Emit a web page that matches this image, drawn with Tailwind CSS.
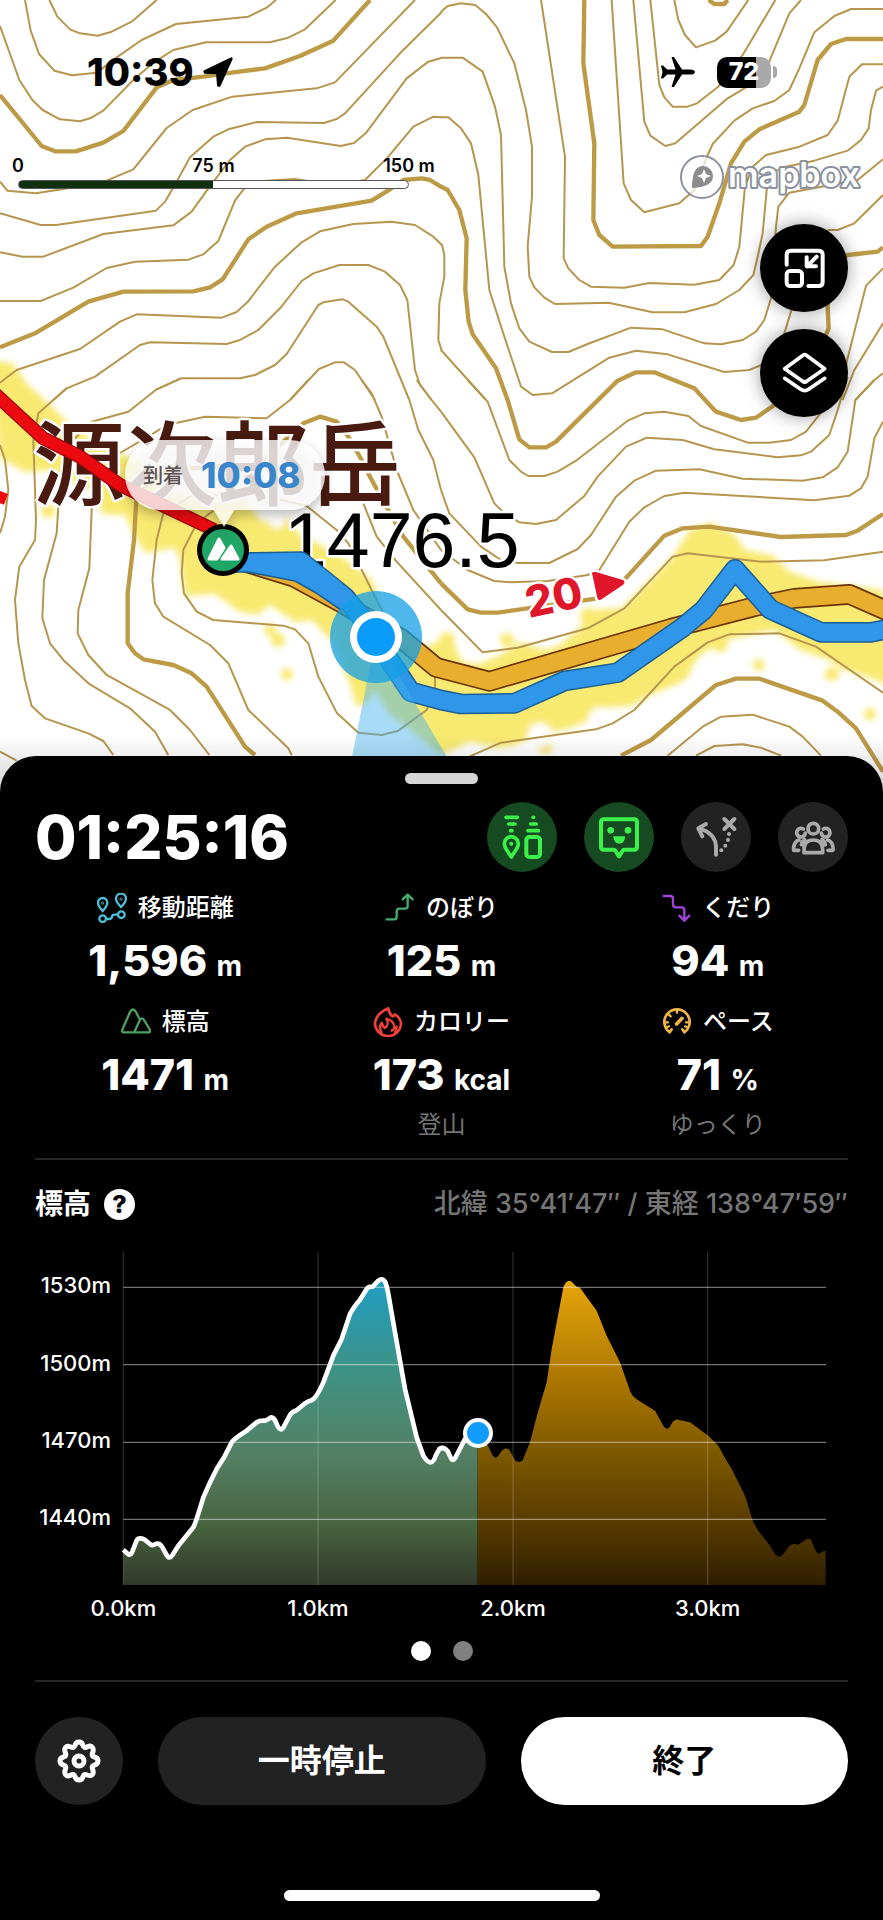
<!DOCTYPE html>
<html lang="ja">

<head>
  <meta charset="UTF-8">
  <meta name="viewport" content="width=device-width, initial-scale=1.0">
  <title>活動記録</title>
  <script src="https://cdn.jsdelivr.net/npm/@tailwindcss/browser@4"></script>
</head>

<body class="bg-black font-['Inter','Noto_Sans_CJK_JP',sans-serif]">

  <!-- Map -->
  <section class="relative h-[800px] overflow-hidden bg-white">
    <svg class="absolute inset-0 w-full h-full" viewBox="0 0 883 800" preserveAspectRatio="xMidYMin slice" aria-label="地図">
      <defs>
        <filter id="soft" x="-5%" y="-5%" width="110%" height="110%"><feGaussianBlur stdDeviation="3" /></filter>
        <filter id="drop" x="-20%" y="-30%" width="140%" height="180%"><feDropShadow dx="0" dy="5" stdDeviation="6" flood-opacity=".35" /></filter>
        <linearGradient id="edge" x1="0" y1="0" x2="0" y2="1"><stop offset="0" stop-color="#000" stop-opacity="0" /><stop offset="1" stop-color="#000" stop-opacity=".2" /></linearGradient>
      </defs>

      <!-- heatmap -->
      <g filter="url(#soft)" fill="#f8e970">
        <path d="M-10 360L12 363 28 385 45 400 70 425 100 445 135 460 160 490 200 500 245 500 262 522 285 515 300 535 340 555 372 580 385 620 420 650 441 640 455 646 462 662 480 664 500 655 520 642 545 650 560 645 580 628 590 610 622 608 650 580 670 560 690 530 710 523 735 535 745 550 772 555 790 572 820 582 883 590 900 690 870 678 840 668 830 660 800 650 775 630 755 634 725 640 700 655 682 682 650 695 632 706 600 708 590 720 570 728 530 738 515 745 500 748 470 742 441 755 425 742 405 725 390 715 375 690 365 705 356 706 352 690 335 645 312 620 295 622 270 605 258 615 240 612 215 594 185 596 180 560 175 548 145 553 132 530 125 515 102 514 95 490 70 480 50 470 25 472 0 458z" />
        <circle cx="278" cy="640" r="7" /><circle cx="270" cy="630" r="6" /><circle cx="287" cy="674" r="6" /><circle cx="48" cy="511" r="7" />
        <circle cx="588" cy="616" r="8" /><circle cx="507" cy="640" r="7" /><circle cx="447" cy="640" r="8" /><circle cx="545" cy="747" r="7" /><circle cx="759" cy="665" r="6" /><circle cx="832" cy="674" r="7" /><circle cx="870" cy="714" r="6" /><circle cx="683" cy="672" r="7" /><circle cx="720" cy="644" r="8" />
        <g fill="#fff"><circle cx="598" cy="717" r="9" /><circle cx="540" cy="735" r="12" /><circle cx="277" cy="520" r="8" /></g>
      </g>

      <!-- contours: one group per quarter of the view, three units to the pixel -->
      <g fill="none" stroke="#b6964f" stroke-width="6" stroke-linejoin="round">
        <g transform="scale(.33333)">
          <path d="M148 0L172 50 210 88 240 100 293 107 335 95 395 65 470 0M75 0L92 92 117 162 163 212 216 226 290 218 350 172 425 120 528 72 745 50 800 23 828 0" />
          <path d="M0 78L58 240 97 300 128 330 180 358 240 364 270 355 310 332 400 240 460 188 520 150 618 127 810 127 865 113 915 88 1007 0M0 545L22 572 107 580 190 567 320 542 400 508 500 384 578 330 697 290 950 265 1005 247 1245 0" />
          <path d="M0 640L122 675 168 675 468 632 495 605 530 545 570 472 640 410 685 388 770 366 972 369 1010 357 1035 340 1200 160 1326 35M0 757L68 770 130 770 310 702 520 676 575 635 625 565 690 480 735 440 795 418 862 413 1022 438 1062 429 1097 400 1220 235 1285 185 1326 173" />
          <path d="M0 903L122 903 220 863 320 804 405 785 565 779 610 763 655 723 705 602 735 562 800 542 885 537 1000 555 1095 540 1165 470 1240 380 1300 350 1326 352" />
          <path d="M0 1148L50 1110 240 1047 360 965 410 943 665 953 710 936 742 907 825 800 905 727 960 694 1060 672 1175 665 1245 675 1300 710 1326 735 1333 765 1333 830 1318 910 1315 1020 1326 1055" />
          <path d="M160 1200L200 1165 285 1130 420 1035 450 1027 680 1032 720 1020 775 990 840 925 905 843 940 820 1018 795 1105 795 1155 815 1200 855 1222 900 1245 1110 1260 1155 1295 1200" />
          <path d="M470 1168L543 1135 720 1135 765 1125 825 1095 860 1062 955 915 970 907 1028 898 1045 905 1130 980 1150 1010 1228 1200M870 1200L957 1107 1005 1087 1032 1087 1065 1110 1125 1200" />
          <path stroke="#bd9a46" stroke-width="13" d="M0 285L125 438 165 454 228 454 310 428 370 393 470 262 520 240 610 230 700 217 795 205 900 168 1000 122 1110 0M0 1042L105 1000 265 905 370 875 580 874 630 862 668 838 745 718 800 680 890 640 1115 602 1170 568 1210 540 1265 535 1290 540 1326 562" />
        </g>
        <g transform="translate(441 0) scale(.33333)">
          <path d="M0 35L20 18 60 10 103 15 135 42 168 82 220 190 255 330 273 440 273 590 260 740 265 830 280 862 310 893 342 912 503 908 635 937 730 937 825 912 895 870 937 825 950 770 965 700 978 560 1000 515 1035 500 1120 482 1220 452 1260 420 1283 385 1290 330 1305 272 1326 260" />
          <path d="M300 0L372 470 368 775 382 805 415 840 450 860 550 863 625 849 760 854 835 840 878 795 895 740 912 560 935 500 975 465 1070 442 1160 405 1190 362 1225 230 1263 193 1326 193" />
          <path d="M512 0L548 550 570 600 610 637 715 610 760 570 800 465 815 432 880 362 935 325 1000 303 1045 270 1075 205 1120 97 1180 48 1230 27 1326 27M577 0L595 200 610 365 628 407 673 438 703 430 860 295 935 250 970 220 1045 40 1080 0" />
          <path d="M628 0L655 255 670 292 695 320 740 320 768 310 830 262 905 165 1003 0M700 0L712 60 732 105 765 142 822 122 857 95 922 0" />
          <path d="M0 173L65 173 125 215 162 320 180 405 190 800 210 910 235 985 265 1025 333 1056 382 1056 440 1032 570 983 665 988 790 1030 840 1033 905 1020 945 995 970 960 990 895 1005 680 1012 620 1045 578 1250 540 1326 478" />
          <path d="M0 352L22 352 60 385 90 430 112 525 145 870 190 1010 240 1160 275 1185 333 1180 505 1073 585 1052 680 1063 850 1116 925 1110 965 1093 1030 1000 1050 935 1100 720 1165 690 1190 690 1240 670 1326 585" />
          <path d="M0 1050L135 1200M1326 805L1275 857 1225 1055 1200 1150 1135 1245M1326 970L1240 1110 1205 1200M1326 1120L1300 1140 1243 1200" />
          <path stroke="#bd9a46" stroke-width="13" d="M430 0L427 190 460 430 457 660 475 705 515 740 780 738 800 710 835 610 870 490 910 425 955 388 1075 335 1090 315 1130 180 1170 132 1215 117 1326 117M803 0L820 12 850 12 860 0M0 560L20 570 55 630 77 715 73 870 83 965 95 1003 165 1105 200 1200 235 1318 265 1342 315 1342 345 1325 530 1142 585 1117 640 1117 760 1165 825 1235 900 1260 945 1253 1000 1215 1080 1120 1140 1040 1163 985 1160 920 1170 800 1220 765 1310 755 1326 742" />
        </g>
        <g transform="translate(0 380) scale(.33333)">
          <path d="M0 195L15 240 25 330 15 410 0 460M200 25L115 100 100 180 108 420 105 480 58 560 45 660 55 790 75 900 95 978 135 1015 265 1060 310 1083 340 1125" />
          <path d="M543 -5L470 28 385 95 275 125 200 200 178 300 175 380 170 460 132 600 127 715 150 790 190 840 265 910 390 985 465 1055 505 1125" />
          <path d="M925 0L870 60 800 115 615 110 500 135 460 160 355 222 280 310 275 390 268 565 235 690 233 760 265 825 320 885 510 990 570 1050 628 1125" />
          <path d="M875 1125L865 1105 745 990 685 850 630 795 490 710 465 670 457 600 470 480 490 400 570 350 760 340 920 378 1010 450 1045 490 1085 570 1115 630 1180 760" />
          <path d="M640 392L590 430 550 510 545 580 552 640 590 695 640 720 850 737 885 748 925 790 955 890 1010 998 1075 1058 1145 1065 1195 1052 1280 990 1305 930 1305 890" />
          <path d="M1085 0L1115 40 1145 110 1190 270 1240 390 1323 510M1228 60L1255 150 1300 240 1323 330M1250 0L1295 60 1323 95M1090 370L1130 470 1190 545 1323 690M0 1115L50 1142" />
          <path stroke="#bd9a46" stroke-width="13" d="M765 1125L735 1100 620 920 575 880 520 855 430 838 405 820 383 790 383 640 402 480 410 340 500 270 780 250 910 130 960 110 1010 125 1045 170 1085 240 1110 290 1170 400 1210 470 1323 610" />
        </g>
        <g transform="translate(441 380) scale(.33333)">
          <path d="M80 0L140 65 205 240 240 275 262 288 310 288 350 275 405 242 560 122 610 100 670 95 742 108 780 138 920 188 985 188 1050 180 1095 155 1135 105" />
          <path d="M0 95L100 232 160 370 190 400 235 427 285 432 345 420 430 348 470 290 555 200 618 173 725 180 820 208 1010 232 1080 226 1110 215 1165 165 1190 90 1220 -10" />
          <path d="M0 330L25 400 120 500 180 540 230 549 325 549 410 507 450 465 525 350 580 302 645 272 775 268 905 296 1085 302 1145 292 1190 262 1220 215 1243 60 1300 0M0 510L80 570 160 603 210 607 320 603 440 585 475 570 565 425 610 382 670 348 730 338 1120 361 1225 347 1260 325 1280 290 1300 175 1326 125" />
          <path d="M0 690L125 817 230 803 440 745 550 685 695 530 740 520 960 545 1150 541 1326 515M85 1130L180 1088 465 1048 515 1030 580 990 700 860 800 787 865 763 1015 760 1125 800 1326 938" />
          <path d="M680 1127L785 1040 840 1010 935 1004 1045 1040 1085 1070 1140 1127M765 1127L820 1098 905 1093 960 1103 1020 1127" />
          <path stroke="#bd9a46" stroke-width="13" d="M0 610L80 688 120 698 170 698 470 655 545 605 670 467 725 445 805 440 1020 471 1215 465 1250 452 1326 402M540 1127L630 1080 825 915 885 896 955 896 1145 962 1190 995 1245 1045 1326 1175" />
        </g>
      </g>

      <!-- place labels -->
      <g stroke="#fff" stroke-width="5" stroke-linejoin="round" paint-order="stroke">
        <text x="33" y="498" font-size="92" font-weight="500" fill="#481a10" font-family="Noto Sans CJK JP, sans-serif">源次郎岳</text>
        <text x="284" y="567" font-size="77" fill="#000" font-family="Liberation Sans, sans-serif">1476.5</text>
        <g fill="#e0162b" transform="translate(529 618) rotate(-12)">
          <text font-size="43" font-weight="800">20</text>
          <path d="M71 -29Q70 -33 75 -31L99 -18Q103 -16 99 -13L74 -3Q71 -2 71 -6z" />
        </g>
      </g>

      <!-- routes -->
      <g transform="translate(441 380) scale(.33333)" fill="none" stroke-linejoin="round">
        <path stroke="#a3090c" stroke-width="42" d="M-1340 40L-1193 175 -1083 230 -963 315 -680 450" />
        <path stroke="#ea0a10" stroke-width="34" d="M-1340 40L-1193 175 -1083 230 -963 315 -680 450M-1340 345L-1305 358" />
        <path stroke="#6b3307" stroke-width="62" d="M-593 545L-440 592 -300 668 -120 775 -15 862 145 904 690 745 940 680 1060 655 1225 643 1400 720" />
        <path stroke="#e8af2e" stroke-width="52" d="M-593 545L-440 592 -300 668 -120 775 -15 862 145 904 690 745 940 680 1060 655 1225 643 1400 720" />
        <path stroke="#1c5f94" stroke-width="62" d="M-640 548L-420 545 -290 650 -200 760 -158 835 -91 935 0 960 60 972 220 970 370 903 530 878 728 740 788 690 882 568 988 688 1140 757 1290 757 1400 735" />
        <path fill="#2f96ea" stroke="#1c5f94" stroke-width="5" d="M-600 572L-438 603 -373 640 -300 690 -260 640 -420 530z" />
        <path stroke="#2f96ea" stroke-width="53" d="M-640 548L-420 545 -290 650 -200 760 -158 835 -91 935 0 960 60 972 220 970 370 903 530 878 728 740 788 690 882 568 988 688 1140 757 1290 757 1400 735" />
      </g>

      <!-- current position -->
      <path fill="#3fb0ee" fill-opacity=".45" d="M376 637L352 757 447 757z" />
      <circle cx="376" cy="637" r="46" fill="#149fe6" fill-opacity=".75" />
      <circle cx="376" cy="637" r="26" fill="#fff" />
      <circle cx="376" cy="637" r="19" fill="#0a9cfb" />

      <!-- summit marker and arrival time -->
      <circle cx="223" cy="550" r="26" fill="#000" />
      <circle cx="223" cy="550" r="21" fill="#20a666" />
      <path fill="#fff" stroke="#fff" stroke-width="3" stroke-linejoin="round" d="M209 559L219 539 224 548 217 559zM222 559L231 546 238 559z" />
      <path fill="#fff" fill-opacity=".78" filter="url(#drop)" d="M160 440H290A35 35 0 0 1 290 510H234L224 527 214 510H160A35 35 0 0 1 160 440z" />
      <text x="143" y="483" font-size="20" font-weight="500" fill="#5b5254">到着</text>
      <text x="201" y="488" font-size="35" font-weight="800" fill="#3a86cb">10:08</text>
      <rect y="735" width="883" height="65" fill="url(#edge)" />
    </svg>

    <div class="relative flex flex-col">
      <div class="mt-12 h-12 flex items-center justify-between pl-[87px] pr-[106px]">
        <div class="flex items-center gap-2">
          <time class="text-[38px] font-extrabold leading-none">10:39</time>
          <svg class="w-8 h-8" viewBox="0 0 96 96" aria-hidden="true"><path stroke="#000" stroke-width="8" stroke-linejoin="round" d="M88 8L8 46 9 49 46 51 49 88 52 88z" /></svg>
        </div>
        <div class="flex items-center gap-[21px]">
          <svg class="w-9 h-8" viewBox="0 0 36 32" aria-label="機内モード"><path d="M35 16c0-1.700-2-2.600-5-2.600h-8L14 1h-2.500l4 12.400H7.200L3 9.500H1L2.500 16 1 22.500h2l4.200-3.900h8.300L11.500 31H14l8-12.400h8c3 0 5-.9 5-2.600z" /></svg>
          <div class="flex items-center gap-[2px]">
            <div class="w-[54px] h-[31px] rounded-[10px] flex items-center justify-center text-white text-[25px] font-extrabold bg-linear-to-r from-black from-73% to-[#a9a9a9] to-73%">72</div>
            <span class="w-1 h-3 rounded-r-full bg-[#a9a9a9]"></span>
          </div>
        </div>
      </div>

      <div class="mt-[51px] h-[60px] flex items-center justify-between pl-[18px] pr-[18px]">
        <div class="w-[391px] mb-2.5">
          <div class="relative h-5 text-[18px] leading-5 font-semibold">
            <span class="absolute left-0 -translate-x-1/2">0</span>
            <span class="absolute left-1/2 -translate-x-1/2 whitespace-nowrap">75 m</span>
            <span class="absolute left-full -translate-x-1/2 whitespace-nowrap">150 m</span>
          </div>
          <div class="mt-1 h-[9px] rounded-full border border-[#555] bg-linear-to-r from-[#10300f] from-50% to-white to-50%"></div>
        </div>
        <svg class="w-[186px] h-[52px]" viewBox="0 0 186 52" aria-label="mapbox">
          <circle cx="23" cy="26" r="21" fill="#fff" fill-opacity=".7" stroke="#8b919d" stroke-width="2" />
          <path fill="#8c8c8c" d="M13 37Q13 15 24 15A10 10 0 0 1 34 25Q34 36 13 37z" />
          <path fill="#fff" d="M25 18l2 5 5 2-5 2-2 5-2-5-5-2 5-2z" />
          <text x="49" y="36" font-size="34" font-weight="600" fill="#fff" stroke="#8b919d" stroke-width="4" stroke-linejoin="round" paint-order="stroke">mapbox</text>
        </svg>
      </div>

      <div class="mt-[17px] pr-[35px] flex flex-col items-end gap-[17px]">
        <button class="size-[88px] rounded-full bg-black shadow-[0_0_18px_rgba(0,0,0,.4)]" aria-label="縮小表示">
          <svg viewBox="0 0 264 264" fill="none" stroke="#fff" stroke-width="12" stroke-linecap="round" stroke-linejoin="round"><path d="M80 122V92q0-12 12-12h84q12 0 12 12v82q0 12-12 12h-31M170 98l-29 29M140 100v27h28" /><rect x="80" y="141" width="46" height="45" rx="10" /></svg>
        </button>
        <button class="size-[88px] rounded-full bg-black shadow-[0_0_18px_rgba(0,0,0,.4)]" aria-label="地図レイヤー">
          <svg viewBox="0 0 264 264" fill="none" stroke="#fff" stroke-width="11" stroke-linecap="round" stroke-linejoin="round"><path d="M127 80q7-6 14 0l53 39-53 37q-7 6-14 0l-53-37zM74 148l48 33q12 8 24 0l48-33" /></svg>
        </button>
      </div>
    </div>
  </section>

  <!-- Activity sheet -->
  <main class="relative -mt-11 rounded-t-[36px] bg-black text-white px-[35px] pb-[18px]">
    <div class="flex justify-center pt-[17px]"><span class="w-[73px] h-[11px] rounded-full bg-[#d6d6d6]"></span></div>

    <div class="mt-[18px] flex items-center justify-between">
      <h1 class="text-[60px] leading-[70px] font-extrabold">01:25:16</h1>
      <div class="flex gap-[27px]">
        <button class="size-[70px] rounded-full bg-[#164a20] text-[#3cf04c]" aria-label="位置情報の送受信">
          <svg viewBox="0 0 210 210" fill="none" stroke="currentColor" stroke-width="12" stroke-linecap="round" stroke-linejoin="round"><path d="M57 46h34M65 66h19M71 86h4M138 46h2M131 66h17M123 86h31M73 165C62 146 52 138 52 125a21 21 0 0 1 42 0c0 13-10 21-21 40z" stroke-width="11" /><rect x="118" y="105" width="41" height="60" rx="9" /><circle cx="73" cy="125" r="6" fill="currentColor" stroke="none" /></svg>
        </button>
        <button class="size-[70px] rounded-full bg-[#164a20] text-[#3cf04c]" aria-label="見守り">
          <svg viewBox="0 0 210 210" fill="none" stroke="currentColor" stroke-width="12" stroke-linecap="round" stroke-linejoin="round"><path d="M60 52h90q9 0 9 9v73q0 9-9 9h-28q-6 0-9 8l-8 12-8-12q-3-8-9-8H60q-9 0-9-9V61q0-9 9-9z" /><g fill="currentColor" stroke="none"><circle cx="80" cy="85" r="10" /><circle cx="132" cy="85" r="10" /><path d="M88 103h35q0 22-17 22t-18-22z" /></g></svg>
        </button>
        <button class="size-[70px] rounded-full bg-[#222] text-[#aaa]" aria-label="ルート外れ通知">
          <svg viewBox="0 0 210 210" fill="none" stroke="currentColor" stroke-width="12" stroke-linecap="round" stroke-linejoin="round"><path d="M105 158V132Q101 92 54 80M75 66L52 79 64 103M130 51l30 30M160 51l-30 30" /><g fill="currentColor" stroke="none"><circle cx="144" cy="96" r="6" /><circle cx="141" cy="114" r="6" /><circle cx="133" cy="131" r="6" /><circle cx="121" cy="145" r="6" /></g></svg>
        </button>
        <button class="size-[70px] rounded-full bg-[#222] text-[#aaa]" aria-label="メンバー">
          <svg viewBox="0 0 210 210" fill="none" stroke="currentColor" stroke-width="11" stroke-linecap="round" stroke-linejoin="round"><circle cx="106" cy="80" r="16" /><path d="M78 152v-8q0-30 28-30t28 30v8zM62 145H47v-9q2-17 16-22M150 145h15v-9q-2-17-16-22M70 128q2-10 10-15M142 128q-2-10-10-15" /><path d="M82 93a13 13 0 1 1-6-12M130 93a13 13 0 1 0 6-12" /></svg>
        </button>
      </div>
    </div>

    <dl class="mt-5 grid grid-cols-3 gap-x-4 gap-y-[22px] text-center">
      <div>
        <dt class="h-8 flex items-center justify-center gap-[11px] text-[24px] font-medium">
          <svg class="size-[30px]" viewBox="0 0 90 90" fill="none" stroke="#4dbfd6" stroke-width="7" stroke-linecap="round" aria-hidden="true"><path d="M17 54Q3 38 3 29a14 14 0 0 1 28 0q0 9-14 25zM72 42Q57 26 57 17a15 15 0 0 1 30 0q0 9-15 25z" /><circle cx="17" cy="77" r="10" /><circle cx="73" cy="65" r="10" /><path d="M28 78h8q8 0 9-7t10-6h7" /><circle cx="17" cy="30" r="1" /><circle cx="72" cy="18" r="1" /></svg>
          移動距離
        </dt>
        <dd class="mt-3 h-12 text-[43px] leading-[48px] font-extrabold">1,596 <span class="text-[28px] leading-none font-bold">m</span></dd>
      </div>
      <div>
        <dt class="h-8 flex items-center justify-center gap-[11px] text-[24px] font-medium">
          <svg class="size-[30px]" viewBox="0 0 90 90" fill="none" stroke="#3fae6e" stroke-width="7" stroke-linecap="round" stroke-linejoin="round" aria-hidden="true"><path d="M5 79h22q8 0 8-8V56q0-9 8-9h17q8 0 8-8V6M53 19L68 5l15 14" /></svg>
          のぼり
        </dt>
        <dd class="mt-3 h-12 text-[43px] leading-[48px] font-extrabold">125 <span class="text-[28px] leading-none font-bold">m</span></dd>
      </div>
      <div>
        <dt class="h-8 flex items-center justify-center gap-[11px] text-[24px] font-medium">
          <svg class="size-[30px]" viewBox="0 0 90 90" fill="none" stroke="#a243dc" stroke-width="7" stroke-linecap="round" stroke-linejoin="round" aria-hidden="true"><path d="M8 9h20q8 0 8 8v17q0 9 8 9h18q8 0 8 8v32M55 68l15 15 15-15" /></svg>
          くだり
        </dt>
        <dd class="mt-3 h-12 text-[43px] leading-[48px] font-extrabold">94 <span class="text-[28px] leading-none font-bold">m</span></dd>
      </div>
      <div>
        <dt class="h-8 flex items-center justify-center gap-[11px] text-[24px] font-medium">
          <svg class="size-[30px]" viewBox="0 0 90 90" fill="none" stroke="#4f9f62" stroke-width="7" stroke-linecap="round" stroke-linejoin="round" aria-hidden="true"><path d="M82 76H9q-8 0-5-8L27 15q9-15 18 0l9 18M40 76l16-36q7-12 14 0l17 29q3 7-5 7" /></svg>
          標高
        </dt>
        <dd class="mt-3 h-12 text-[43px] leading-[48px] font-extrabold">1471 <span class="text-[28px] leading-none font-bold">m</span></dd>
      </div>
      <div>
        <dt class="h-8 flex items-center justify-center gap-[11px] text-[24px] font-medium">
          <svg class="size-[30px]" viewBox="0 0 90 90" fill="none" stroke="#f0403a" stroke-width="8" stroke-linecap="round" stroke-linejoin="round" aria-hidden="true"><path d="M46 4Q10 20 6 47a39 39 0 1 0 78 2Q82 32 66 22q-3 6-8 6-10-8-12-24z" /><path stroke-width="7" d="M26 76q-10-14 0-29 4 14 10 16 14-10 4-28 22 6 24 24 0 8-8 12M66 76q6-8 5-18" /></svg>
          カロリー
        </dt>
        <dd class="mt-3 h-12 text-[43px] leading-[48px] font-extrabold">173 <span class="text-[28px] leading-none font-bold">kcal</span></dd>
        <dd class="mt-[11px] text-[24px] leading-8 text-[#757575]">登山</dd>
      </div>
      <div>
        <dt class="h-8 flex items-center justify-center gap-[11px] text-[24px] font-medium">
          <svg class="size-[30px]" viewBox="0 0 90 90" fill="none" stroke="#f0b548" stroke-width="8" stroke-linecap="round" stroke-linejoin="round" aria-hidden="true"><path d="M23 76a38 38 0 1 1 44 0M23 76l6-9M67 76l-6-9" /><path stroke-width="7" d="M10 46h8M20 22l6 6M45 10v7M80 46h-8M15 60l6-2M75 60l-6-2" /><path stroke-width="11" d="M44 51L60 34" /></svg>
          ペース
        </dt>
        <dd class="mt-3 h-12 text-[43px] leading-[48px] font-extrabold">71 <span class="text-[28px] leading-none font-bold">%</span></dd>
        <dd class="mt-[11px] text-[24px] leading-8 text-[#757575]">ゆっくり</dd>
      </div>
    </dl>

    <hr class="mt-[17px] border-t-2 border-[#262626]">

    <div class="mt-[26px] h-9 flex items-center justify-between">
      <h2 class="flex items-center gap-[13px] text-[28px] font-bold">標高
        <button class="size-[31px] rounded-full bg-white text-black text-[25px] leading-none font-extrabold" aria-label="標高について">?</button>
      </h2>
      <p class="text-[27px] font-medium text-[#757575]">北緯 35°41′47″ / 東経 138°47′59″</p>
    </div>

    <!-- Elevation profile -->
    <svg class="mt-[27px] w-full h-auto" viewBox="105 270 2439 1125" role="img" aria-label="標高グラフ">
      <defs>
        <linearGradient id="past" gradientUnits="userSpaceOnUse" x1="0" y1="360" x2="0" y2="1278">
          <stop offset="0" stop-color="#1f9dc4" /><stop offset=".33" stop-color="#41917f" /><stop offset=".58" stop-color="#547f65" /><stop offset=".8" stop-color="#48653f" /><stop offset="1" stop-color="#32392a" />
        </linearGradient>
        <linearGradient id="ahead" gradientUnits="userSpaceOnUse" x1="0" y1="360" x2="0" y2="1278">
          <stop offset="0" stop-color="#e8a60c" /><stop offset=".35" stop-color="#a87400" /><stop offset=".6" stop-color="#785500" /><stop offset=".8" stop-color="#583b00" /><stop offset="1" stop-color="#2f1e00" />
        </linearGradient>
      </defs>
      <path fill="url(#past)" d="M370 1278V1172L390 1188 415 1140 432 1140 457 1158 480 1155 508 1197 535 1160 580 1105 610 1015 650 930 695 848 770 790 815 775 843 812 875 762 915 732 945 715 970 670 1000 590 1050 465 1105 385 1145 360 1160 385 1185 520 1215 690 1250 835 1275 900 1295 912 1320 868 1337 870 1358 903 1395 845 1433 822V1278z" />
      <path fill="url(#ahead)" d="M1433 1278V822L1465 862 1477 888Q1488 905 1498 886 1513 860 1528 872L1545 904Q1558 914 1568 904L1590 850 1612 765 1640 670 1655 570 1690 385Q1700 358 1715 368L1730 383 1740 386 1790 455 1820 530 1860 610 1890 695Q1895 710 1912 722L1965 755 1990 800Q2003 820 2014 795 2025 775 2040 784L2070 790 2125 830 2155 860 2170 888 2195 930 2235 1010 2260 1090 2275 1115 2310 1160 2325 1185Q2338 1200 2350 1185L2368 1160 2380 1154 2395 1157 2420 1140 2432 1140 2446 1172Q2455 1192 2465 1178L2477 1175V1278z" />
      <path fill="none" stroke="#fff" stroke-opacity=".45" stroke-width="4" d="M370 385H2478M370 617H2478M370 850H2478M370 1081H2478" />
      <path fill="none" stroke="#fff" stroke-opacity=".16" stroke-width="4" d="M370 278V1278M954 278V1278M1539 278V1278M2123 278V1278" />
      <path fill="none" stroke="#fff" stroke-width="14" stroke-linejoin="round" d="M370 1172L383 1184Q392 1192 398 1175L410 1144Q416 1134 434 1142L450 1155Q457 1162 466 1155 478 1150 486 1163L500 1188Q508 1203 518 1187L535 1160 580 1105Q586 1095 610 1015L630 970 650 930 675 890 695 850Q700 840 740 815L770 790Q778 784 795 785 805 782 813 775 822 774 828 790 842 826 853 800L870 768Q876 758 890 754L915 733Q925 726 935 724 950 716 970 670L1000 590 1025 540 1050 465Q1060 445 1080 422L1100 390Q1106 382 1118 383L1135 365Q1146 355 1155 368 1160 378 1165 405L1185 520 1215 690 1250 835 1270 890Q1295 930 1307 890L1318 870Q1330 862 1343 876L1352 896Q1358 910 1366 896L1395 840 1433 822" />
      <circle cx="1434" cy="822" r="45" fill="#fff" />
      <circle cx="1434" cy="822" r="33" fill="#119bfb" />
      <g fill="#fff" font-size="66" font-weight="500">
        <g text-anchor="end">
          <text x="333" y="403">1530m</text><text x="333" y="635">1500m</text><text x="333" y="868">1470m</text><text x="333" y="1099">1440m</text>
        </g>
        <g text-anchor="middle">
          <text x="370" y="1371">0.0km</text><text x="954" y="1371">1.0km</text><text x="1539" y="1371">2.0km</text><text x="2123" y="1371">3.0km</text>
        </g>
      </g>
    </svg>

    <div class="mt-[17px] flex justify-center gap-[22px]">
      <span class="size-5 rounded-full bg-white"></span>
      <span class="size-5 rounded-full bg-[#808080]"></span>
    </div>

    <hr class="mt-[19px] border-t-2 border-[#262626]">

    <div class="mt-[35px] flex gap-[35px]">
      <button class="size-[88px] shrink-0 rounded-full bg-[#222] flex items-center justify-center" aria-label="設定">
        <svg class="size-11" viewBox="0 0 44 44" fill="none" stroke="#fff" stroke-width="5" stroke-linejoin="round"><path d="M22 3q3 0 4 3.500 1 3 4 1.500 4-2 5.500.5t0 5.500q-1 3 2 4Q41 19 41 22t-3.500 4q-3 1-2 4 1.500 3.500 0 5.500t-5.500.5q-3-1.500-4 1.500Q25 41 22 41t-4-3.500q-1-3-4-1.500-4 2-5.500-.5t0-5.500q1-3-2-4Q3 25 3 22t3.500-4q3-1 2-4-1.500-3.500 0-5.500t5.500-.5q3 1.500 4-1.500Q19 3 22 3z" /><circle cx="22" cy="22" r="5" /></svg>
      </button>
      <button class="flex-1 h-[88px] rounded-full bg-[#222] text-[32px] font-bold">一時停止</button>
      <button class="flex-1 h-[88px] rounded-full bg-white text-black text-[32px] font-bold">終了</button>
    </div>

    <div class="mt-[85px] flex justify-center"><span class="w-[316px] h-[11px] rounded-full bg-white"></span></div>
  </main>
</body>

</html>
